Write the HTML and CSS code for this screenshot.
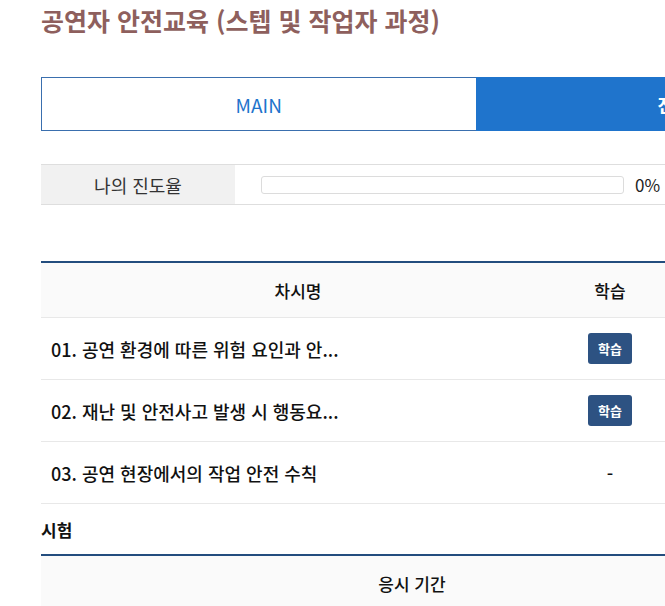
FILE: index.html
```html
<!DOCTYPE html>
<html lang="ko">
<head>
<meta charset="utf-8">
<link rel="stylesheet" href="styles.css">
</head>
<body>
<div class="page">
  <h1 class="title">공연자 안전교육 (스텝 및 작업자 과정)</h1>
  <div class="tabs">
    <div class="tab tab-main">MAIN</div>
    <div class="tab tab-active">진도현황</div>
  </div>
  <div class="progress-row">
    <div class="progress-label">나의 진도율</div>
    <div class="progress-cell">
      <div class="progress-bar"><div class="progress-fill" style="width:0%"></div></div>
      <span class="progress-value">0%</span>
    </div>
  </div>
  <table class="list lessons">
    <colgroup><col class="c-name"><col class="c-study"><col class="c-rest"></colgroup>
    <thead>
      <tr><th>차시명</th><th>학습</th><th></th></tr>
    </thead>
    <tbody>
      <tr><td class="name">01. 공연 환경에 따른 위험 요인과 안...</td><td class="center"><button class="btn">학습</button></td><td></td></tr>
      <tr><td class="name">02. 재난 및 안전사고 발생 시 행동요...</td><td class="center"><button class="btn">학습</button></td><td></td></tr>
      <tr><td class="name">03. 공연 현장에서의 작업 안전 수칙</td><td class="center">-</td><td></td></tr>
    </tbody>
  </table>
  <h2 class="section">시험</h2>
  <table class="list exam">
    <colgroup><col class="c-period"><col class="c-exam"></colgroup>
    <thead>
      <tr><th>응시 기간</th><th></th></tr>
    </thead>
  </table>
</div>
</body>
</html>
```
FILE: styles.css
```css
html, body {
  margin: 0;
  padding: 0;
  overflow: hidden;
  background: #fff;
}
body {
  font-family: "Noto Sans CJK KR", "Noto Sans", sans-serif;
  color: #111;
}
.page {
  width: 868px;
  padding-left: 41px;
}
.title {
  margin: 0;
  padding-top: 3px;
  height: 74px;
  font-size: 25px;
  line-height: 34px;
  font-weight: 700;
  color: #8e5f5d;
}
.tabs {
  display: flex;
  height: 54px;
}
.tab {
  flex: 1;
  display: flex;
  align-items: center;
  justify-content: center;
  font-size: 19px;
  box-sizing: border-box;
}
.tab-main {
  border: 1px solid #3a6fae;
  border-right: none;
  color: #1f74cc;
  background: #fff;
}
.tab-active {
  background: #1f74cc;
  color: #fff;
  font-weight: 700;
}
.progress-row {
  display: flex;
  margin-top: 33px;
  height: 41px;
  border-top: 1px solid #dedede;
  border-bottom: 1px solid #dedede;
  box-sizing: border-box;
}
.progress-label {
  width: 194px;
  background: #f1f1f1;
  display: flex;
  align-items: center;
  justify-content: center;
  font-size: 18px;
  color: #333;
}
.progress-cell {
  flex: 1;
  display: flex;
  align-items: center;
  padding-left: 26px;
  gap: 11px;
}
.progress-bar {
  width: 363px;
  height: 18px;
  box-sizing: border-box;
  border: 1px solid #dcdcdc;
  border-radius: 3px;
  background: #fff;
}
.progress-fill {
  height: 100%;
  background: #1f74cc;
}
.progress-value {
  font-size: 17px;
  color: #222;
}
.list {
  width: 868px;
  border-collapse: collapse;
  table-layout: fixed;
  border-top: 2px solid #234d7e;
}
.lessons {
  margin-top: 56px;
}
.c-name { width: 514px; }
.c-study { width: 110px; }
.c-period { width: 742px; }
.list th {
  height: 54px;
  background: #fafafa;
  font-size: 17px;
  font-weight: 500;
  color: #111;
  border-bottom: 1px solid #e8e8e8;
  padding: 0;
}
.list td {
  height: 61px;
  font-size: 18px;
  font-weight: 500;
  border-bottom: 1px solid #e8e8e8;
  padding: 0;
}
.list td.name {
  padding-left: 10px;
}
.list td.center {
  text-align: center;
}
.btn {
  width: 44px;
  height: 31px;
  border: none;
  border-radius: 3px;
  background: #2d5282;
  color: #fff;
  font-family: "Noto Sans CJK KR", sans-serif;
  font-size: 13px;
  font-weight: 700;
  padding: 0;
  cursor: pointer;
}
.section {
  margin: 0;
  height: 50px;
  font-size: 17px;
  font-weight: 700;
  line-height: 52px;
}
```
